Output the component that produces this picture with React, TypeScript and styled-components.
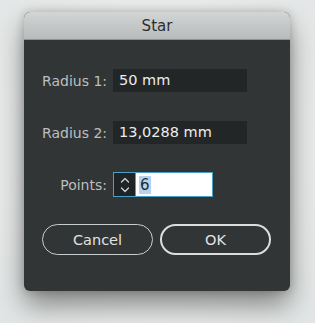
import styled, { createGlobalStyle } from 'styled-components';

const GlobalStyle = createGlobalStyle`
  html, body {
    margin: 0;
    padding: 0;
    background: #eceeee;
    font-family: 'DejaVu Sans', 'Liberation Sans', sans-serif;
  }
`;

export default function App() {
  return (
    <Page>
      <GlobalStyle />
      <Dialog>
        <TitleBar>Star</TitleBar>
        <Body>
          <Form>
            <Label>Radius 1:</Label>
            <TextField>50 mm</TextField>
            <Label>Radius 2:</Label>
            <TextField>13,0288 mm</TextField>
            <Label>Points:</Label>
            <Spinner>
              <Stepper>
                <svg width="12" height="20" viewBox="0 0 12 20" fill="none" stroke="#cfd3d4" strokeWidth="1.3" strokeLinecap="round" strokeLinejoin="round">
                  <path d="M2.5 7 L6 3.5 L9.5 7" />
                  <path d="M2.5 13 L6 16.5 L9.5 13" />
                </svg>
              </Stepper>
              <NumberField>
                <Selected>6</Selected>
              </NumberField>
            </Spinner>
          </Form>
          <Buttons>
            <Button>Cancel</Button>
            <Button $primary>OK</Button>
          </Buttons>
        </Body>
      </Dialog>
    </Page>
  );
}

const Page = styled.div`
  width: 315px;
  height: 323px;
  padding: 12px 0 0 24px;
  box-sizing: border-box;
  background: radial-gradient(ellipse at 50% 45%, #f4f5f5 0%, #e9ebeb 70%, #e2e5e5 100%);
  overflow: hidden;
`;

const Dialog = styled.div`
  width: 266px;
  height: 279px;
  border-radius: 6px;
  overflow: hidden;
  display: flex;
  flex-direction: column;
  background: #323535;
  box-shadow: 0 14px 28px rgba(0, 0, 0, 0.45), 0 0 10px rgba(0, 0, 0, 0.2);
`;

const TitleBar = styled.div`
  height: 28px;
  flex: none;
  display: flex;
  align-items: center;
  justify-content: center;
  background: linear-gradient(#d3d5d5, #b8bbbb);
  border-bottom: 1px solid #8f9393;
  box-sizing: border-box;
  color: #2c2e2e;
  font-size: 15px;
`;

const Body = styled.div`
  flex: 1;
  padding: 29px 0 0 18px;
`;

const Form = styled.div`
  display: grid;
  grid-template-columns: 65px 134px;
  column-gap: 6px;
  row-gap: 29px;
  align-items: center;
`;

const Label = styled.div`
  text-align: right;
  color: #bcbfbf;
  font-size: 14px;
  white-space: nowrap;
`;

const TextField = styled.div`
  height: 23px;
  background: #232626;
  color: #ececec;
  font-size: 14.5px;
  line-height: 23px;
  padding-left: 6px;
  box-sizing: border-box;
`;

const Spinner = styled.div`
  width: 100px;
  height: 25px;
  display: flex;
  border: 1px solid #4a9fc6;
  box-sizing: border-box;
  margin: -1px 0;
`;

const Stepper = styled.div`
  width: 21px;
  background: #1f2527;
  display: flex;
  align-items: center;
  justify-content: center;
  border-right: 1px solid #4a9fc6;
`;

const NumberField = styled.div`
  flex: 1;
  background: #ffffff;
  display: flex;
  align-items: center;
  padding-left: 3px;
`;

const Selected = styled.span`
  background: #b5d3ee;
  color: #1d2a33;
  font-size: 15px;
  line-height: 18px;
  padding: 0 1px;
`;

const Buttons = styled.div`
  display: flex;
  gap: 7px;
  margin-top: 28px;
`;

const Button = styled.div<{ $primary?: boolean }>`
  width: 111px;
  height: 31px;
  box-sizing: border-box;
  border-radius: 16px;
  border: ${(p) => (p.$primary ? '2px solid #dcdede' : '1.5px solid #c9cccc')};
  display: flex;
  align-items: center;
  justify-content: center;
  color: #e0e2e2;
  font-size: 14.5px;
`;
